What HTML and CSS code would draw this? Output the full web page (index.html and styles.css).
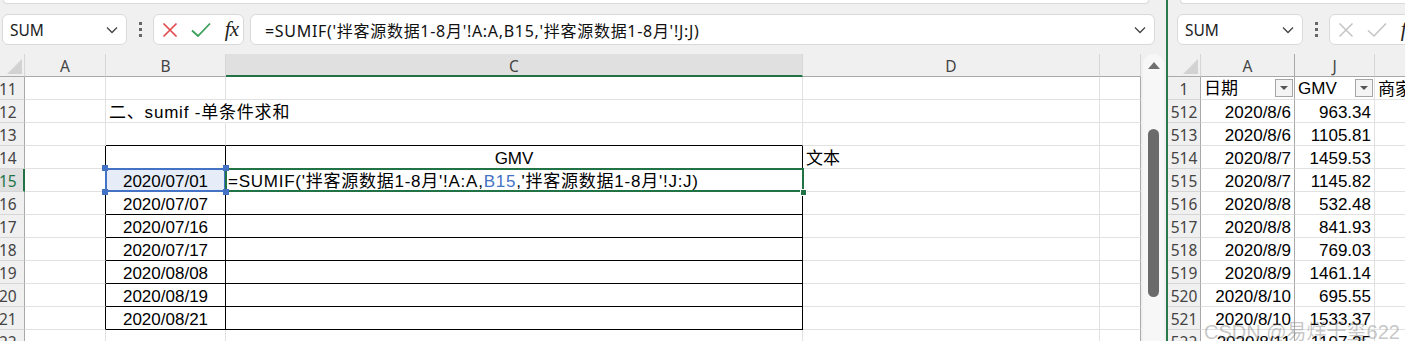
FILE: index.html
```html
<!DOCTYPE html>
<html lang="zh-CN">
<head>
<meta charset="UTF-8">
<meta name="viewport" content="width=device-width,initial-scale=1.0">
<title>SUMIF</title>
<link rel="stylesheet" href="styles.css">
</head>
<body>
<div class="win left">
<div class="ribbon"></div>
<div class="fbar">
<div class="namebox"><span>SUM</span><svg width="12" height="8" viewBox="0 0 12 8"><polyline points="1,1.5 6,6.5 11,1.5" fill="none" stroke="#444" stroke-width="1.3"/></svg></div>
<div class="dots"><i></i><i></i><i></i></div>
<div class="btns">
<svg width="16" height="16" viewBox="0 0 16 16"><path d="M1.5 1.5L14.5 14.5M14.5 1.5L1.5 14.5" stroke="#e5484d" stroke-width="1.7"/></svg>
<svg width="20" height="16" viewBox="0 0 20 16"><polyline points="1,8.5 7,14 19,1.5" fill="none" stroke="#3aa05a" stroke-width="1.8"/></svg>
<span class="fx">fx</span>
</div>
<div class="finput"><span>=SUMIF('拌客源数据1-8月'!A:A,B15,'拌客源数据1-8月'!J:J)</span><svg width="12" height="8" viewBox="0 0 12 8"><polyline points="1,1.5 6,6.5 11,1.5" fill="none" stroke="#444" stroke-width="1.3"/></svg></div>
</div>
<div class="main">
<div class="sheet lsheet">
<div class="row hdr"><div class="c corner"><b></b></div><div class="c">A</div><div class="c">B</div><div class="c sel">C</div><div class="c">D</div><div class="c edge"></div></div>
<div class="row"><div class="c rh">11</div><div class="c"></div><div class="c"></div><div class="c"></div><div class="c"></div><div class="c edge"></div></div>
<div class="row"><div class="c rh">12</div><div class="c"></div><div class="c nr title">二、sumif -单条件求和</div><div class="c"></div><div class="c"></div><div class="c edge"></div></div>
<div class="row"><div class="c rh">13</div><div class="c"></div><div class="c bk-b"></div><div class="c bk-b"></div><div class="c"></div><div class="c edge"></div></div>
<div class="row"><div class="c rh">14</div><div class="c bk-r"></div><div class="c bk-r bk-b"></div><div class="c bk-r bk-b mid">GMV</div><div class="c">文本</div><div class="c edge"></div></div>
<div class="row"><div class="c rh rsel">15</div><div class="c bk-r"></div><div class="c bk-r bk-b mid ref">2020/07/01<i class="h tl"></i><i class="h tr"></i><i class="h bl"></i><i class="h br"></i></div><div class="c bk-r bk-b edit">=SUMIF('拌客源数据1-8月'!A:A,<span class="blue">B15</span>,'拌客源数据1-8月'!J:J)<i class="h br g"></i></div><div class="c"></div><div class="c edge"></div></div>
<div class="row"><div class="c rh">16</div><div class="c bk-r"></div><div class="c bk-r bk-b mid">2020/07/07</div><div class="c bk-r bk-b"></div><div class="c"></div><div class="c edge"></div></div>
<div class="row"><div class="c rh">17</div><div class="c bk-r"></div><div class="c bk-r bk-b mid">2020/07/16</div><div class="c bk-r bk-b"></div><div class="c"></div><div class="c edge"></div></div>
<div class="row"><div class="c rh">18</div><div class="c bk-r"></div><div class="c bk-r bk-b mid">2020/07/17</div><div class="c bk-r bk-b"></div><div class="c"></div><div class="c edge"></div></div>
<div class="row"><div class="c rh">19</div><div class="c bk-r"></div><div class="c bk-r bk-b mid">2020/08/08</div><div class="c bk-r bk-b"></div><div class="c"></div><div class="c edge"></div></div>
<div class="row"><div class="c rh">20</div><div class="c bk-r"></div><div class="c bk-r bk-b mid">2020/08/19</div><div class="c bk-r bk-b"></div><div class="c"></div><div class="c edge"></div></div>
<div class="row"><div class="c rh">21</div><div class="c bk-r"></div><div class="c bk-r bk-b mid">2020/08/21</div><div class="c bk-r bk-b"></div><div class="c"></div><div class="c edge"></div></div>
<div class="row"><div class="c rh">22</div><div class="c"></div><div class="c"></div><div class="c"></div><div class="c"></div><div class="c edge"></div></div>
</div>
<div class="vscroll"><div class="up"></div><div class="thumb"></div></div>
</div>
</div>
<div class="win right">
<div class="ribbon"></div>
<div class="fbar">
<div class="namebox"><span>SUM</span><svg width="12" height="8" viewBox="0 0 12 8"><polyline points="1,1.5 6,6.5 11,1.5" fill="none" stroke="#444" stroke-width="1.3"/></svg></div>
<div class="dots"><i></i><i></i><i></i></div>
<div class="btns">
<svg width="16" height="16" viewBox="0 0 16 16"><path d="M1.5 1.5L14.5 14.5M14.5 1.5L1.5 14.5" stroke="#c4c4c4" stroke-width="1.5"/></svg>
<svg width="20" height="16" viewBox="0 0 20 16"><polyline points="1,8.5 7,14 19,1.5" fill="none" stroke="#c4c4c4" stroke-width="1.5"/></svg>
<span class="fx">fx</span>
</div>
</div>
<div class="sheet rsheet">
<div class="row hdr"><div class="c corner"><b></b></div><div class="c hid">A</div><div class="c">J</div><div class="c"></div></div>
<div class="row"><div class="c rh">1</div><div class="c hid flt">日期<i class="fb"></i></div><div class="c flt">GMV<i class="fb"></i></div><div class="c">商家</div></div>
<div class="row"><div class="c rh">512</div><div class="c hid num">2020/8/6</div><div class="c num">963.34</div><div class="c"></div></div>
<div class="row"><div class="c rh">513</div><div class="c hid num">2020/8/6</div><div class="c num">1105.81</div><div class="c"></div></div>
<div class="row"><div class="c rh">514</div><div class="c hid num">2020/8/7</div><div class="c num">1459.53</div><div class="c"></div></div>
<div class="row"><div class="c rh">515</div><div class="c hid num">2020/8/7</div><div class="c num">1145.82</div><div class="c"></div></div>
<div class="row"><div class="c rh">516</div><div class="c hid num">2020/8/8</div><div class="c num">532.48</div><div class="c"></div></div>
<div class="row"><div class="c rh">517</div><div class="c hid num">2020/8/8</div><div class="c num">841.93</div><div class="c"></div></div>
<div class="row"><div class="c rh">518</div><div class="c hid num">2020/8/9</div><div class="c num">769.03</div><div class="c"></div></div>
<div class="row"><div class="c rh">519</div><div class="c hid num">2020/8/9</div><div class="c num">1461.14</div><div class="c"></div></div>
<div class="row"><div class="c rh">520</div><div class="c hid num">2020/8/10</div><div class="c num">695.55</div><div class="c"></div></div>
<div class="row"><div class="c rh">521</div><div class="c hid num">2020/8/10</div><div class="c num">1533.37</div><div class="c"></div></div>
<div class="row"><div class="c rh">522</div><div class="c hid num">2020/8/11</div><div class="c num">1107.25</div><div class="c"></div></div>
</div>
<div class="mark">CSDN @易烊千玺622</div>
</div>
</body>
</html>
```
FILE: styles.css
```css
body{
margin:0;
height:341px;
overflow:hidden;
display:flex;
background:#f0f0f0;
font-family:"Liberation Sans","Noto Sans CJK SC",sans-serif;
color:#000;
}
.win{
display:flex;
flex-direction:column;
position:relative;
overflow:hidden;
}
.left{
width:1166px;
flex:none;
border-right:2px solid #2b7a4b;
}
.right{
flex:1;
}
.ribbon{
flex:none;
height:3px;
background:#fff;
border:1px solid #dadada;
border-top:none;
border-radius:0 0 7px 7px;
margin:0 17px 0 3px;
}
.right .ribbon{
margin:0 -20px 0 12px;
}
.fbar{
flex:none;
display:flex;
height:31px;
margin-top:10px;
}
.namebox,.btns,.finput,.dots{
flex:none;
}
.namebox,.btns,.finput{
box-sizing:border-box;
height:31px;
background:#fff;
border:1px solid #d9d9d9;
border-radius:6px;
display:flex;
align-items:center;
}
.namebox{
width:125px;
margin-left:2px;
padding:0 8px 0 7px;
justify-content:space-between;
font-family:"Noto Sans",sans-serif;
font-size:15.5px;
color:#222;
}
.right .namebox{
margin-left:9px;
width:126px;
}
.dots{
width:26px;
display:flex;
flex-direction:column;
align-items:center;
justify-content:center;
gap:3px;
}
.dots i{
width:3px;
height:3px;
background:#666;
}
.btns{
width:91px;
padding:0 5px 0 8px;
justify-content:space-between;
}
.fx{
font-family:"Liberation Serif",serif;
font-style:italic;
font-size:21px;
color:#222;
line-height:1;
letter-spacing:-1px;
}
.finput{
width:905px;
margin-left:6px;
padding:0 8px 0 14px;
justify-content:space-between;
font-family:"Noto Sans","Noto Sans CJK SC",sans-serif;
font-size:16px;
letter-spacing:0.7px;
color:#111;
}
.main{
display:flex;
margin-top:9px;
flex:1;
}
.sheet{
background:#fff;
overflow:hidden;
align-self:flex-start;
flex:none;
}
.lsheet{
width:1141px;
}
.row{
display:grid;
height:23px;
}
.lsheet .row{
grid-template-columns:25px 81px 120px 577px 297px 41px;
}
.rsheet{
margin-top:9px;
}
.rsheet .row{
grid-template-columns:33px 94px 80px 60px;
}
.c{
box-sizing:border-box;
height:23px;
border-right:1px solid #e1e1e1;
border-bottom:1px solid #e1e1e1;
white-space:nowrap;
padding:0 3px;
font-size:17px;
line-height:25px;
position:relative;
}
.hdr .c{
background:#f0f0f0;
border-right-color:#d6d6d6;
border-bottom-color:#a9a9a9;
text-align:center;
font-family:"Noto Sans",sans-serif;
font-size:15.5px;
line-height:25px;
color:#444;
}
.hdr .sel{
background:#e0e0e0;
border-bottom:2px solid #217346;
}
.hdr .corner{
display:flex;
align-items:flex-end;
justify-content:flex-end;
padding:0 2px 2px 0;
}
.corner b{
width:0;
height:0;
border-left:15px solid transparent;
border-bottom:15px solid #d2d2d2;
}
.rh{
background:#f0f0f0;
border-right-color:#a9a9a9;
border-bottom-color:#d6d6d6;
color:#444;
font-family:"Noto Sans",sans-serif;
font-size:15.5px;
padding:0;
text-indent:-1px;
}
.rsheet .rh{
text-align:center;
text-indent:0;
}
.rsel{
background:#e0e0e0;
border-right:2px solid #217346;
color:#217346;
}
.edge{
border-right-color:#a9a9a9;
}
.nr{
border-right-color:transparent;
}
.title{
letter-spacing:0.8px;
}
.bk-r{
border-right-color:#000;
}
.bk-b{
border-bottom-color:#000;
}
.mid{
text-align:center;
}
.ref{
background:#e6edf8;
}
.ref::after,.edit::after{
content:"";
position:absolute;
left:-1px;
top:-1px;
right:-1px;
bottom:-1px;
border:2px solid #4472c4;
}
.edit::after{
border-color:#217346;
right:-2px;
}
.edit{
padding-left:2px;
letter-spacing:0.75px;
}
.blue{
color:#4472c4;
}
.h{
position:absolute;
width:6px;
height:6px;
background:#4472c4;
z-index:2;
}
.h.g{
background:#217346;
border:1px solid #fff;
width:5px;
height:5px;
right:-5px;
bottom:-5px;
}
.tl{left:-4px;top:-4px;}
.tr{right:-4px;top:-4px;}
.bl{left:-4px;bottom:-4px;}
.br{right:-4px;bottom:-4px;}
.vscroll{
width:21px;
margin-left:2px;
background:#f7f7f7;
border-radius:10px 10px 0 0;
display:flex;
flex-direction:column;
align-items:center;
}
.up{
margin-top:8px;
width:0;
height:0;
border-left:6px solid transparent;
border-right:6px solid transparent;
border-bottom:7px solid #6f6f6f;
}
.thumb{
margin-top:60px;
width:11px;
height:168px;
background:#6b6b6b;
border-radius:6px;
}
.hid{
border-right-color:#a9a9a9;
}
.hdr .hid{
border-right-color:#a9a9a9;
}
.num{
text-align:right;
}
.flt{
display:flex;
align-items:center;
justify-content:space-between;
padding-right:1px;
}
.fb{
width:18px;
height:18px;
box-sizing:border-box;
border:1px solid #a6a6a6;
background:#f4f4f4;
position:relative;
}
.fb::after{
content:"";
position:absolute;
left:4px;
top:6px;
border-left:4px solid transparent;
border-right:4px solid transparent;
border-top:4px solid #555;
}
.mark{
position:absolute;
left:36px;
top:316px;
font-size:20px;
color:rgba(130,130,130,0.45);
white-space:nowrap;
}
```
